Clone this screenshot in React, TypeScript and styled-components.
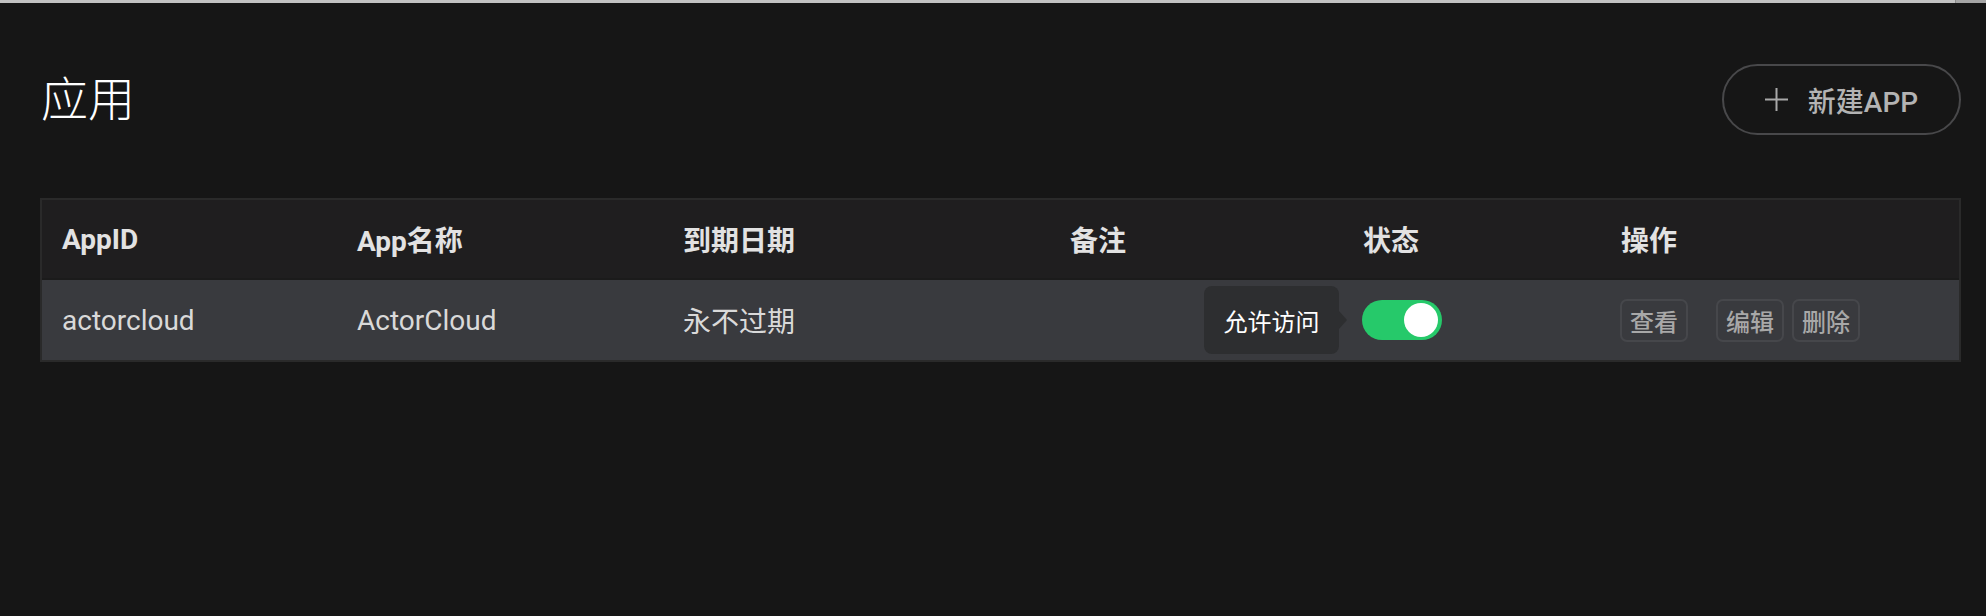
import React from 'react';
import styled, { createGlobalStyle } from 'styled-components';

const GlobalStyle = createGlobalStyle`
  html, body { margin: 0; padding: 0; background: #161616; }
  body { font-family: Roboto, "Noto Sans CJK SC", sans-serif; -webkit-font-smoothing: antialiased; }
  * { box-sizing: border-box; }
`;

const TopEdge = styled.div`
  height: 3px;
  background: #c2c2c2;
  display: flex;
  justify-content: flex-end;
`;

const TopEdgeTail = styled.div`
  width: 31px;
  background: #a5a5a5;
  border-left: 1px solid #8a8a8a;
`;

const Page = styled.main`
  padding: 0 25px 0 40px;
`;

const Header = styled.header`
  display: flex;
  align-items: center;
  justify-content: space-between;
  padding-top: 61px;
  margin-bottom: 63px;
`;

const Title = styled.h1`
  margin: 0 0 0 1px;
  font-size: 47px;
  font-weight: 300;
  color: #ffffff;
  line-height: 1;
`;

const NewButton = styled.button`
  width: 239px;
  height: 71px;
  border: 2px solid #48484a;
  border-radius: 36px;
  background: transparent;
  color: #b3b3b3;
  font-family: inherit;
  font-size: 28px;
  font-weight: 500;
  display: flex;
  align-items: center;
  justify-content: center;
  gap: 20px;
  padding: 0;
`;

const Table = styled.div`
  border: 2px solid #2a2a2a;
`;

const Row = styled.div<{ $head?: boolean }>`
  display: grid;
  grid-template-columns: 295px 326px 387px 293px 258px 1fr;
  height: 80px;
  background: ${p => (p.$head ? '#1f1e1f' : '#393a3e')};
  border-bottom: ${p => (p.$head ? '2px solid #1b1b1b' : 'none')};
  align-items: center;
`;

const Cell = styled.div<{ $head?: boolean }>`
  padding-left: 20px;
  font-size: 28px;
  font-weight: ${p => (p.$head ? 700 : 400)};
  color: ${p => (p.$head ? '#e2e2e2' : '#d9d9d9')};
  display: flex;
  align-items: center;
`;

const SwitchWrap = styled.div`
  position: relative;
  margin-left: -1px;
`;

const Switch = styled.div`
  width: 80px;
  height: 40px;
  border-radius: 20px;
  background: #26c96a;
  position: relative;
`;

const Knob = styled.span`
  position: absolute;
  top: 3px;
  right: 4px;
  width: 34px;
  height: 34px;
  border-radius: 50%;
  background: #ffffff;
`;

const Tooltip = styled.div`
  position: absolute;
  right: calc(100% + 23px);
  top: 50%;
  transform: translateY(-50%);
  width: 135px;
  height: 68px;
  border-radius: 8px;
  background: #2d2e30;
  color: #ffffff;
  font-size: 24px;
  display: flex;
  align-items: center;
  justify-content: center;
  white-space: nowrap;
  &::after {
    content: '';
    position: absolute;
    left: 100%;
    top: 50%;
    transform: translateY(-50%);
    border-style: solid;
    border-width: 9px 0 9px 8px;
    border-color: transparent transparent transparent #2d2e30;
  }
`;

const Actions = styled.div`
  display: flex;
  align-items: center;
  margin-left: -1px;
`;

const ActionButton = styled.button<{ $gap?: number }>`
  width: 68px;
  height: 43px;
  margin-left: ${p => p.$gap ?? 0}px;
  border: 2px solid #46474b;
  border-radius: 7px;
  background: transparent;
  color: #a8a8a8;
  font-family: inherit;
  font-size: 24px;
  font-weight: 500;
  padding: 0;
  display: flex;
  align-items: center;
  justify-content: center;
`;

const PlusIcon = () => (
  <svg width="23" height="23" viewBox="0 0 23 23">
    <path d="M11.5 0 V23 M0 11.5 H23" stroke="#a8a8a8" strokeWidth="2" fill="none" />
  </svg>
);

export default function App() {
  return (
    <>
      <GlobalStyle />
      <TopEdge>
        <TopEdgeTail />
      </TopEdge>
      <Page>
        <Header>
          <Title>应用</Title>
          <NewButton>
            <PlusIcon />
            <span>新建APP</span>
          </NewButton>
        </Header>
        <Table>
          <Row $head>
            <Cell $head>AppID</Cell>
            <Cell $head>App名称</Cell>
            <Cell $head>到期日期</Cell>
            <Cell $head>备注</Cell>
            <Cell $head>状态</Cell>
            <Cell $head>操作</Cell>
          </Row>
          <Row>
            <Cell>actorcloud</Cell>
            <Cell>ActorCloud</Cell>
            <Cell>永不过期</Cell>
            <Cell></Cell>
            <Cell>
              <SwitchWrap>
                <Tooltip>允许访问</Tooltip>
                <Switch>
                  <Knob />
                </Switch>
              </SwitchWrap>
            </Cell>
            <Cell>
              <Actions>
                <ActionButton>查看</ActionButton>
                <ActionButton $gap={28}>编辑</ActionButton>
                <ActionButton $gap={8}>删除</ActionButton>
              </Actions>
            </Cell>
          </Row>
        </Table>
      </Page>
    </>
  );
}
